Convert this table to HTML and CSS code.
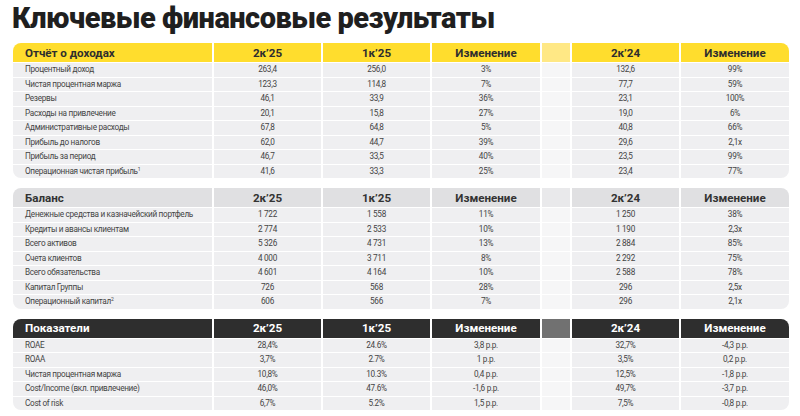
FILE: index.html
```html
<!DOCTYPE html>
<html lang="ru">
<head>
<meta charset="utf-8">
<link rel="stylesheet" href="styles.css">
</head>
<body>
<div class="page">
  <h1 class="title">Ключевые финансовые результаты</h1>

  <div class="tbl yellow">
    <div class="h hl">Отчёт о доходах</div><div class="h">2к’25</div><div class="h">1к’25</div><div class="h">Изменение</div><div class="h g"></div><div class="h">2к’24</div><div class="h">Изменение</div>
    <div class="l">Процентный доход</div><div class="c">263,4</div><div class="c">256,0</div><div class="c">3%</div><div class="g"></div><div class="c">132,6</div><div class="c">99%</div>
    <div class="l">Чистая процентная маржа</div><div class="c">123,3</div><div class="c">114,8</div><div class="c">7%</div><div class="g"></div><div class="c">77,7</div><div class="c">59%</div>
    <div class="l">Резервы</div><div class="c">46,1</div><div class="c">33,9</div><div class="c">36%</div><div class="g"></div><div class="c">23,1</div><div class="c">100%</div>
    <div class="l">Расходы на привлечение</div><div class="c">20,1</div><div class="c">15,8</div><div class="c">27%</div><div class="g"></div><div class="c">19,0</div><div class="c">6%</div>
    <div class="l">Административные расходы</div><div class="c">67,8</div><div class="c">64,8</div><div class="c">5%</div><div class="g"></div><div class="c">40,8</div><div class="c">66%</div>
    <div class="l">Прибыль до налогов</div><div class="c">62,0</div><div class="c">44,7</div><div class="c">39%</div><div class="g"></div><div class="c">29,6</div><div class="c">2,1x</div>
    <div class="l">Прибыль за период</div><div class="c">46,7</div><div class="c">33,5</div><div class="c">40%</div><div class="g"></div><div class="c">23,5</div><div class="c">99%</div>
    <div class="l">Операционная чистая прибыль<sup>1</sup></div><div class="c">41,6</div><div class="c">33,3</div><div class="c">25%</div><div class="g"></div><div class="c">23,4</div><div class="c">77%</div>
  </div>

  <div class="tbl grey">
    <div class="h hl">Баланс</div><div class="h">2к’25</div><div class="h">1к’25</div><div class="h">Изменение</div><div class="h g"></div><div class="h">2к’24</div><div class="h">Изменение</div>
    <div class="l">Денежные средства и казначейский портфель</div><div class="c">1 722</div><div class="c">1 558</div><div class="c">11%</div><div class="g"></div><div class="c">1 250</div><div class="c">38%</div>
    <div class="l">Кредиты и авансы клиентам</div><div class="c">2 774</div><div class="c">2 533</div><div class="c">10%</div><div class="g"></div><div class="c">1 190</div><div class="c">2,3x</div>
    <div class="l">Всего активов</div><div class="c">5 326</div><div class="c">4 731</div><div class="c">13%</div><div class="g"></div><div class="c">2 884</div><div class="c">85%</div>
    <div class="l">Счета клиентов</div><div class="c">4 000</div><div class="c">3 711</div><div class="c">8%</div><div class="g"></div><div class="c">2 292</div><div class="c">75%</div>
    <div class="l">Всего обязательства</div><div class="c">4 601</div><div class="c">4 164</div><div class="c">10%</div><div class="g"></div><div class="c">2 588</div><div class="c">78%</div>
    <div class="l">Капитал Группы</div><div class="c">726</div><div class="c">568</div><div class="c">28%</div><div class="g"></div><div class="c">296</div><div class="c">2,5x</div>
    <div class="l">Операционный капитал<sup>2</sup></div><div class="c">606</div><div class="c">566</div><div class="c">7%</div><div class="g"></div><div class="c">296</div><div class="c">2,1x</div>
  </div>

  <div class="tbl dark">
    <div class="h hl">Показатели</div><div class="h">2к’25</div><div class="h">1к’25</div><div class="h">Изменение</div><div class="h g"></div><div class="h">2к’24</div><div class="h">Изменение</div>
    <div class="l">ROAE</div><div class="c">28,4%</div><div class="c">24.6%</div><div class="c">3,8 p.p.</div><div class="g"></div><div class="c">32,7%</div><div class="c">-4,3 p.p.</div>
    <div class="l">ROAA</div><div class="c">3,7%</div><div class="c">2.7%</div><div class="c">1 p.p.</div><div class="g"></div><div class="c">3,5%</div><div class="c">0,2 p.p.</div>
    <div class="l">Чистая процентная маржа</div><div class="c">10,8%</div><div class="c">10.3%</div><div class="c">0,4 p.p.</div><div class="g"></div><div class="c">12,5%</div><div class="c">-1,8 p.p.</div>
    <div class="l">Cost/Income (вкл. привлечение)</div><div class="c">46,0%</div><div class="c">47.6%</div><div class="c">-1,6 p.p.</div><div class="g"></div><div class="c">49,7%</div><div class="c">-3,7 p.p.</div>
    <div class="l">Cost of risk</div><div class="c">6,7%</div><div class="c">5.2%</div><div class="c">1,5 p.p.</div><div class="g"></div><div class="c">7,5%</div><div class="c">-0,8 p.p.</div>
  </div>
</div>
</body>
</html>
```

FILE: styles.css
```css
html, body {
  margin: 0;
  padding: 0;
  background: #ffffff;
}

.page {
  padding: 0 11px 0 13px;
  font-family: "Roboto", "Noto Sans", sans-serif;
}

.title {
  margin: 0 0 8px -1px;
  height: 35px;
  font-family: "Roboto", "Inter", sans-serif;
  font-weight: 900;
  font-size: 29px;
  line-height: 37px;
  letter-spacing: -0.5px;
  color: #1f1f1f;
}

.tbl {
  display: grid;
  grid-template-columns: 199px 107px 107px 108px 28px 107px 108px;
  grid-template-rows: 19px;
  grid-auto-rows: 13.5px;
  column-gap: 2px;
  row-gap: 1px;
  border-radius: 8px;
  overflow: hidden;
  margin-bottom: 10px;
  width: 776px;
}

.h {
  display: flex;
  align-items: center;
  justify-content: center;
  font-family: "Roboto", "Inter", sans-serif;
  font-weight: 700;
  font-size: 11.6px;
  color: #2e2e2e;
}

.h.hl {
  justify-content: flex-start;
  padding-left: 12px;
}

.l, .c {
  display: block;
  background: #efeff1;
  font-size: 8.2px;
  letter-spacing: -0.3px;
  line-height: 13.5px;
  color: #444444;
  white-space: nowrap;
}

.l {
  padding-left: 12px;
}

.c {
  text-align: center;
}

.g {
  background: #f6f6f7;
}

sup {
  font-size: 5px;
  line-height: 0;
  vertical-align: 3px;
}

.yellow .h { background: #ffdd2d; }
.yellow .h.g { background: #ffe885; }

.grey .h { background: #e0e0e2; color: #333333; }
.grey .h.g { background: #e9e9eb; }

.dark .h { background: #2e2e2e; color: #ffffff; }
.dark .h.g { background: #717171; }
```
